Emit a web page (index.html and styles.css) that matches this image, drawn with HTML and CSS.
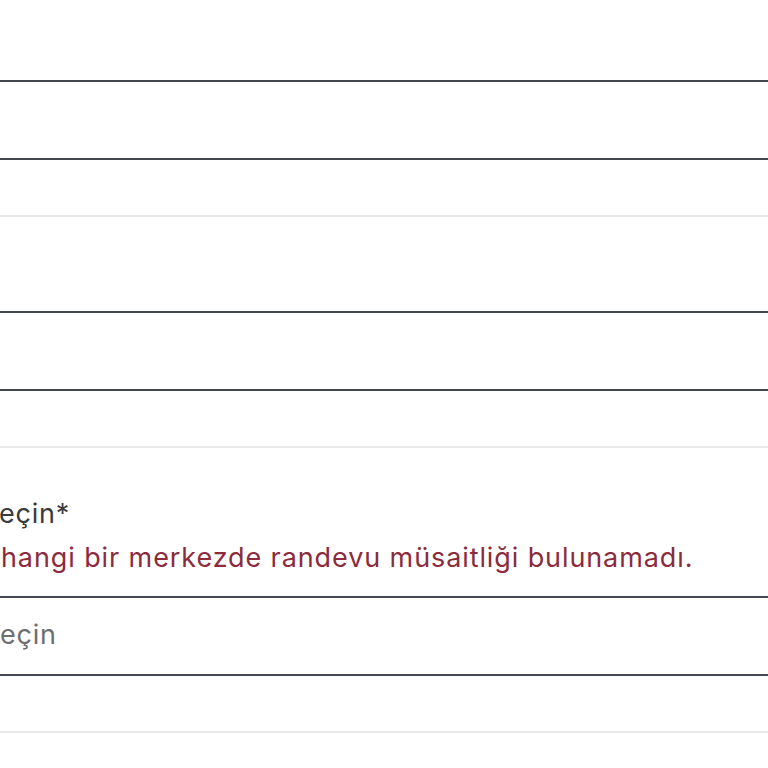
FILE: index.html
```html
<!DOCTYPE html>
<html lang="tr">
<head>
    <meta charset="UTF-8">
    <meta name="viewport" content="width=device-width, initial-scale=1.0">
    <title>Randevu</title>
    <link rel="stylesheet" href="styles.css">
</head>
<body>
    <div class="form">
        <!-- 1. alan -->
        <div class="group first">
            <div class="input"></div>
        </div>

        <!-- 2. alan -->
        <div class="group">
            <div class="input"></div>
        </div>

        <!-- merkez seçimi -->
        <div class="group">
            <div class="label">eçin<span class="star">*</span></div>
            <div class="error">hangi bir merkezde randevu müsaitliği bulunamadı.</div>
            <div class="input select">eçin</div>
        </div>
    </div>
</body>
</html>
```

FILE: styles.css
```css
body{
    margin: 0;
    overflow: hidden;
    background-color: #fff;
    font-family: Inter, "Noto Sans", sans-serif;
    font-size: 27px;
    letter-spacing: 0.75px;
    color: #3a3a3a;
}
.form{
    margin: 0 -12px;
}
.group{
    padding-top: 94px;
    padding-bottom: 55px;
    border-bottom: 2px solid #e9e9e9;
}
.group.first{
    padding-top: 80px;
}
.input{
    height: 76px;
    border: 2px solid #41474d;
    box-sizing: content-box;
    display: flex;
    align-items: center;
    padding: 0 10px;
}
.select{
    color: #6e6e6e;
    box-sizing: border-box;
    height: 80px;
    padding-bottom: 4px;
}
.group:last-child{
    padding-top: 48px;
}
.label{
    padding: 0 11px;
    line-height: 36px;
    color: #3a3a3a;
}
.star{
    color: #3f3a3c;
}
.error{
    padding: 0 13px;
    line-height: 36px;
    letter-spacing: 0.9px;
    color: #8b2b3d;
    margin-top: 8px;
    margin-bottom: 20px;
}
```
